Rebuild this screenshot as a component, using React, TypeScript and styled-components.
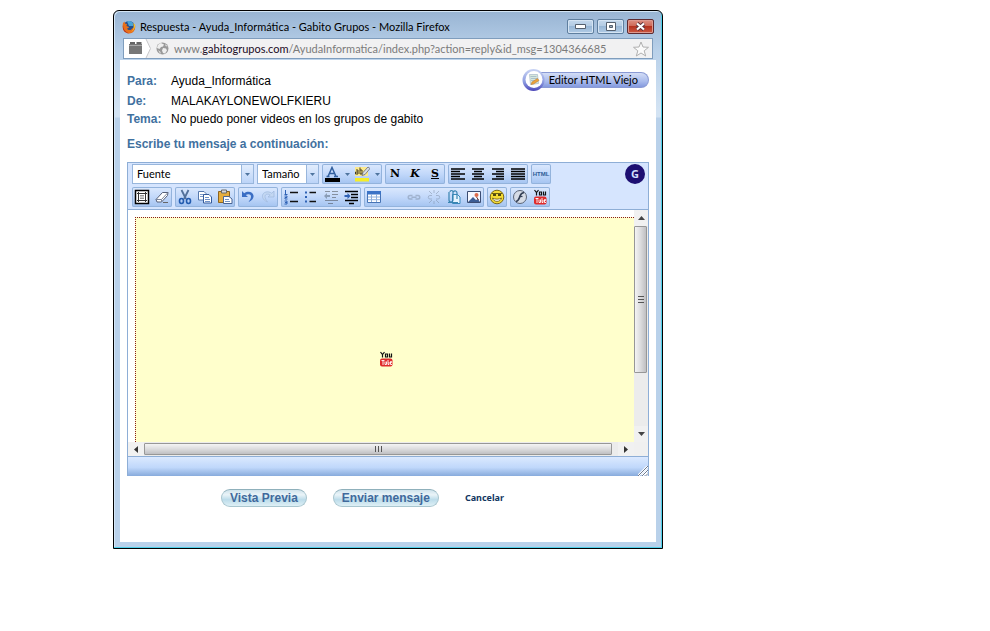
import React from "react";
import styled, { createGlobalStyle, css } from "styled-components";

const ui = `Lato, "Noto Sans", sans-serif`;
const humanist = `"Noto Sans", "Open Sans", sans-serif`;
const arial = `"Liberation Sans", Arial, sans-serif`;

const GlobalStyle = createGlobalStyle`
  * { box-sizing: border-box; }
  body { margin: 0; background: #fff; font-family: ${arial}; font-size: 12px; color: #000; }
  button, input, select { font: inherit; margin: 0; padding: 0; border: 0; background: none; color: inherit; }
`;

const Page = styled.div`
  padding: 10px 20px 40px 113px;
`;

const Frame = styled.main`
  max-width: 550px;
  border: 1px solid #000;
  border-radius: 6px 6px 0 0;
  background: #b9d1ea linear-gradient(#98b4d3, #b9d1ea 40px, #d3e3f3 100px, #d3e3f3 106px, #b9d1ea 107px);
  box-shadow: inset -1px -1px 0 #4fd0ea, inset 1px 1px 0 #d4e6f6;
  padding: 0 6px 6px;
`;

const TitleBar = styled.header`
  display: flex;
  align-items: center;
  height: 27px;
  padding: 4px 2px 0;
  gap: 4px;
  font: 11px/16px ${ui};
`;

const Title = styled.h1`
  flex: 1;
  margin: 0;
  font: inherit;
  white-space: nowrap;
  overflow: hidden;
`;

const Controls = styled.div`
  display: flex;
  gap: 3px;
`;

const ControlButton = styled.button<{ $close?: boolean }>`
  display: grid;
  place-items: center;
  width: 27px;
  height: 15px;
  border: 1px solid ${(p) => (p.$close ? "#5e2a30" : "#5f7f9f")};
  border-radius: 2px;
  box-shadow: inset 0 0 0 1px ${(p) => (p.$close ? "#dd9a90" : "#d5e4f3")};
  background: ${(p) =>
    p.$close
      ? "linear-gradient(#dc8f83, #cf6a58 45%, #b5321f 50%, #cc5a43)"
      : "linear-gradient(#c4d8ec, #b4cce4 45%, #98b7d6 50%, #b2cce6)"};
`;

const AddressBar = styled.div`
  display: flex;
  align-items: center;
  height: 21px;
  margin: 0 3px 1px;
  border: 1px solid #7f9dbd;
  background: #f1f1f2;
  color: #7b7b7b;
`;

const Address = styled.div`
  flex: 1;
  margin-left: 5px;
  overflow: hidden;
  white-space: nowrap;
  font: 11px/18px ${ui};
  b { font-weight: 400; color: #1a0a24; }
`;

const StarButton = styled.button`
  width: 18px;
  height: 18px;
  margin-right: 2px;
`;

const Content = styled.div`
  background: #fff;
  padding: 8px 7px 35px;
`;

const Heading = styled.div`
  display: flex;
  justify-content: space-between;
  align-items: flex-start;
`;

const Fields = styled.dl`
  display: grid;
  grid-template-columns: 44px 1fr;
  grid-template-rows: 20px 20px 16px;
  align-items: center;
  margin: 3px 0 0;
  dt { font-weight: 700; color: #41719f; }
  dd { margin: 0; font: 12px/16px ${arial}; white-space: nowrap; }
`;

const OldEditorButton = styled.button`
  display: flex;
  align-items: center;
  font: 11px/15px ${ui};
  svg { z-index: 1; }
  span {
    height: 16px;
    margin-left: -6px;
    padding: 0 10px 0 9px;
    border: 1px solid #8a9ad4;
    border-left: 0;
    border-radius: 0 8px 8px 0;
    background: linear-gradient(#d3ddf6, #a9bbec 60%, #8499de);
    line-height: 14px;
  }
`;

const Prompt = styled.h2`
  margin: 9px 0 10px;
  font: 700 12px/16px ${arial};
  color: #41719f;
`;

const Editor = styled.section`
  border: 1px solid #8eaed6;
  border-bottom: 0;
`;

const Toolbar = styled.div`
  display: grid;
  gap: 3px;
  padding: 1px 3px 2px 4px;
  background: #d6e5fe;
  border-bottom: 1px solid #8eaed6;
`;

const ToolRow = styled.div`
  display: flex;
  gap: 3px;
  height: 20px;
`;

const Group = styled.div`
  display: flex;
  border-radius: 2px;
  background: linear-gradient(#dce9fd, #c2d8fa 50%, #a3c3f0);
  box-shadow: inset 0 0 0 1px #93b3dc;
`;

const Tool = styled.button<{ $narrow?: boolean; $faded?: boolean }>`
  display: grid;
  place-items: center;
  width: ${(p) => (p.$narrow ? 10 : 20)}px;
  height: 20px;
  opacity: ${(p) => (p.$faded ? 0.45 : 1)};
`;

const Letter = styled.span<{ $look: "bold" | "italic" | "underline" }>`
  font: 900 11px/16px "DejaVu Serif", serif;
  ${(p) => p.$look === "italic" && css`font-style: italic;`}
  ${(p) => p.$look === "underline" && css`text-decoration: underline;`}
`;

const HtmlText = styled.span`
  font: 700 6px/8px ${arial};
  color: #2d5c96;
`;

const Picker = styled.label<{ $width: number }>`
  display: grid;
  grid-template-columns: 1fr 12px;
  width: ${(p) => p.$width}px;
  border: 1px solid #98b6dc;
  background: #fff;
  select {
    grid-area: 1 / 1 / 2 / 3;
    appearance: none;
    padding: 0 14px 0 4px;
    font: 11px/18px ${ui};
    outline: 0;
  }
`;

const PickerArrow = styled.span`
  grid-area: 1 / 2;
  display: grid;
  place-items: center;
  border-left: 1px solid #98b6dc;
  background: linear-gradient(#e2edfd, #bcd4f8);
  pointer-events: none;
`;

const Badge = styled.button`
  width: 20px;
  height: 20px;
  margin-left: auto;
  border-radius: 50%;
  background: #1d0f72;
  color: #d5e0ff;
  font: 700 11px/20px ${humanist};
  text-align: center;
`;

const Workspace = styled.div`
  display: grid;
  grid-template-columns: 1fr 14px;
  grid-template-rows: 232px 14px;
  background: #f0f0f0;
`;

const Sheet = styled.div`
  padding: 7px 0 0 7px;
  background: #fff;
  overflow: hidden;
`;

const Message = styled.div`
  height: 100%;
  padding: 133px 0 0 2px;
  border: 1px dotted #8a1c1c;
  border-width: 1px 0 0 1px;
  background: #ffffcc;
  text-align: center;
  outline: 0;
`;

const Scroll = styled.div<{ $across?: boolean }>`
  display: flex;
  flex-direction: ${(p) => (p.$across ? "row" : "column")};
  background: #ececec;
`;

const ScrollArrow = styled.button`
  display: grid;
  place-items: center;
  flex: 0 0 16px;
  background: #f1f1f1;
`;

const Thumb = styled.div<{ $across?: boolean; $grow: number }>`
  display: grid;
  place-items: center;
  flex: ${(p) => p.$grow} 1 0;
  margin: ${(p) => (p.$across ? "1px 0" : "0 1px 0 0")};
  border: 1px solid #979797;
  border-radius: 1px;
  background: linear-gradient(${(p) => (p.$across ? "180deg" : "90deg")}, #f4f4f4, #dcdcde 50%, #bfbfc2);
`;

const Track = styled.div<{ $grow: number }>`
  flex: ${(p) => p.$grow} 1 0;
`;

const StatusBar = styled.footer`
  display: flex;
  justify-content: flex-end;
  align-items: flex-end;
  height: 20px;
  border-top: 1px solid #8eaed6;
  background: linear-gradient(#dbe9ff, #c0d8fb 55%, #88abdc);
`;

const Actions = styled.div`
  display: flex;
  align-items: center;
  margin: 13px 0 0 94px;
`;

const Pill = styled.button`
  height: 18px;
  margin-right: 26px;
  padding: 0 8px;
  border: 1px solid #a9c6cf;
  border-top-color: #8fb0bb;
  border-radius: 9px;
  background: linear-gradient(#cfe3ec, #eaf4f8 30%, #bcdcea 60%, #dff0f6);
  font: 700 12px/16px ${arial};
  color: #40699c;
`;

const CancelLink = styled.a`
  font: 700 9px/16px ${humanist};
  color: #12375f;
  text-decoration: none;
`;

const Down = () => (
  <svg width="5" height="3" viewBox="0 0 5 3"><path d="M0 0h5L2.5 3z" fill="#4f759f" /></svg>
);

const Firefox = () => (
  <svg width="14" height="14" viewBox="0 0 14 14">
    <circle cx="7" cy="7" r="6" fill="#244f8f" />
    <path d="M5 1.500C9 0 12 3 11 6L7 6z" fill="#4aa3d8" />
    <path d="M1 3C0 8 1 13 7 13.400c5 0 7-5 6-9-.5 3-2 4-3 4-1 2-4 2-5 0 1 0 2-1 2-1.500L4.500 6 5 4 3 3.500 2.500 1.500z" fill="#e8701a" />
    <path d="M13 4.500c.5 4-2 7-5 7.500 3-.5 4-4 3.500-7.500L11 3z" fill="#fcc32c" />
    <path d="M1 5c0 4 2 7 6 8.400C3 13 0 10 1 5z" fill="#b3281c" />
  </svg>
);

const SiteTab = () => (
  <svg width="32" height="19" viewBox="0 0 32 19">
    <path d="M0 0h22l4.500 9.500L22 19H0z" fill="#fff" />
    <path d="M22 0l4.500 9.500L22 19" fill="none" stroke="#c6c6c8" />
    <path d="M5 5h13v10H5z" fill="#777" />
    <path d="M6 3h5v2H6zM12.500 3h5v2h-5z" fill="#666" />
    <path d="M5 6.500h13" stroke="#aaa" />
  </svg>
);

const Globe = () => (
  <svg width="13" height="13" viewBox="0 0 13 13">
    <circle cx="6.500" cy="6.500" r="6" fill="#999" />
    <path d="M5 1l3 1.500-1 2-2 .5-1.500 2-2.500-1C1.500 3 3 1.500 5 1zM7 6l3 .5 1 2-2 3-2-.5-1-2.500zM9.500 2l2 2.500-2-.5zM2 8l2.500 2v2z" fill="#eee" />
  </svg>
);

const Star = () => (
  <svg width="18" height="18" viewBox="0 0 18 18">
    <path d="M9 2l2 5 5.500.3-4.300 3.500 1.500 5.200L9 13l-4.700 3 1.500-5.200L1.500 7.300 7 7z" fill="#fafafa" stroke="#b0b0b0" />
  </svg>
);

const NoteBadge = () => (
  <svg width="24" height="24" viewBox="0 0 24 24">
    <defs>
      <linearGradient id="ring" x1="0" y1="0" x2="0" y2="1">
        <stop offset="0" stopColor="#c9d4f4" /><stop offset=".6" stopColor="#8c9be0" /><stop offset="1" stopColor="#4a45b8" />
      </linearGradient>
    </defs>
    <circle cx="11.500" cy="12" r="11" fill="url(#ring)" />
    <circle cx="12" cy="11.500" r="8.500" fill="#fff" />
    <path d="M7.500 6.500h8l1 9-8 1z" fill="#d7e8dc" stroke="#a9b9c8" strokeWidth=".7" />
    <path d="M8.500 8.500h6M9 10.500h6M9 12.500h4" stroke="#9fb6c8" strokeWidth=".8" />
    <path d="M9 16.500l1-2.500 5.500-3.500 1.500 2-5.500 3.500z" fill="#eda33c" stroke="#b87426" strokeWidth=".5" />
  </svg>
);

const YouTube = () => (
  <svg width="14" height="16" viewBox="0 0 14 16">
    <path d="M1.500 1L3.500 3.500 5.500 1M3.500 3.500V6.500M6.500 3h2v3h-2zM10.500 2.500v3.500h2V2.500" fill="none" stroke="#111" strokeWidth="1.200" />
    <rect x="1" y="7.500" width="12.500" height="8" rx="2" fill="#e02b2b" />
    <path d="M2.500 9.500h3M4 9.500v4.500M6 10.500V13.500h1.500v-3M9 9v4.500h1V11M11 11.500h1.500v-1H11.500v3h1.500" fill="none" stroke="#fff" strokeWidth=".9" />
  </svg>
);

const icons: Record<string, React.ReactNode> = {
  page: <><path d="M1.500 1.500h13v13h-13z" fill="#fff" stroke="#000" strokeWidth="1.500" /><path d="M4.500 4.500h7v7h-7zM3 4.500h10M3 11.500h10M4.500 3v10M11.500 3v10" fill="none" stroke="#333" /><path d="M6 6.500h4M6 8h4M6 9.500h4" stroke="#999" /></>,
  eraser: <><path d="M2 10.500L8.500 3.500H14L13.500 6.500 7.500 13H3z" fill="#fff" stroke="#555f78" /><path d="M2 10.500h5.500L14 3.500M7.500 10.500V13" fill="none" stroke="#7b869c" /><path d="M9 13.500h5" stroke="#666" /></>,
  cut: <><path d="M4.500 1l4.500 9M11.500 1L7 10" stroke="#52709a" strokeWidth="1.800" /><ellipse cx="4.500" cy="12" rx="2" ry="2.500" fill="none" stroke="#245db0" strokeWidth="1.600" /><ellipse cx="11.500" cy="12" rx="2" ry="2.500" fill="none" stroke="#245db0" strokeWidth="1.600" /></>,
  copy: <><path d="M1.500 2.500H7l2.500 2.500v6h-8z" fill="#fff" stroke="#5678ad" /><path d="M3 5.500h4M3 7.500h4" stroke="#7c9acb" /><path d="M6.500 5.500H12l2.500 2.500v6h-8z" fill="#fff" stroke="#355b9b" /><path d="M8 8.500h4M8 10.500h5M8 12.500h5" stroke="#6d90c9" /></>,
  paste: <><path d="M1.500 2.500h11v11h-11z" fill="#e7ae3c" stroke="#8d6420" /><path d="M4.500 1h5v3h-5z" fill="#d8d9db" stroke="#6c6b65" /><path d="M6.500 7.500H12l3 2.500v4.500H6.500z" fill="#fff" stroke="#4a6594" /><path d="M8 10.500h4M8 12.500h5" stroke="#7293c4" /></>,
  undo: <path d="M2 2v6h6L5.800 6C8 4.500 11 5 11 7.500c0 2-1 3.500-2.500 5.500C12 11.500 14 9 13.500 6.500 13 3 8 1.500 4.200 4.300z" fill="#3b6ec4" />,
  redo: <path d="M14 2v6H8l2.200-2C8 4.500 5 5 5 7.500c0 2 1 3.500 2.500 5.500C4 11.500 2 9 2.500 6.500 3 3 8 1.500 11.800 4.300z" fill="#c3d7f2" stroke="#9db8dc" strokeWidth=".7" />,
  ordered: <><path d="M2.500 1v4M1.500 5.500h3M1.500 7h2.500v1.500H2v1.500h2.500M1.500 12h2.500v3H1.500M2 13.500h2" fill="none" stroke="#2f62b5" /><path d="M7 3.500h8M7 12.500h8" stroke="#111" strokeWidth="1.300" /></>,
  bullets: <><path d="M2 2.500h2v2H2zM2 7h2v2H2zM2 11.500h2v2H2z" fill="#2f62b5" /><path d="M6.500 3.500H13M6.500 12.500H13" stroke="#111" strokeWidth="1.300" /></>,
  outdent: <><path d="M2 2.500h5M9 2.500h6M9 5.500h6M9 8.500h4M2 11.500h13M5 14.500h5" stroke="#333" /><path d="M1 7l3-3v2h3v2H4v2z" fill="#456" /></>,
  indent: <><path d="M2 2.500h13M8 5.500h7M8 8.500h7M2 11.500h13M6 14.500h5" stroke="#000" strokeWidth="1.400" /><path d="M7.500 7l-3-3v2h-3v2h3v2z" fill="#2f62b5" /></>,
  table: <><path d="M1.500 2.500h13v11h-13z" fill="#fff" stroke="#4774b5" /><path d="M1 2h14v3.500H1z" fill="#3b73c6" /><path d="M5.500 5v8M10.500 5v8M2 8h12M2 10.700h12" stroke="#8fb0dc" /></>,
  link: <path d="M6.500 6.500H4a1.700 1.700 0 000 3.500h2.500M9.500 6.500H12a1.700 1.700 0 010 3.500H9.500M5.500 8.300h5" fill="none" stroke="#77869c" strokeWidth="1.500" />,
  unlink: <path d="M6 6.500H4A1.700 1.700 0 004 10h2M10 6.500h2a1.700 1.700 0 010 3.500h-2M3 2l3 3M13 2l-3 3M8 1v3M8 12v3M3 14l3-3M13 14l-3-3" fill="none" stroke="#77869c" />,
  anchor: <><path d="M6.500 5.500h5l2.500 2.500v6.500H6.500z" fill="#e5f4ff" stroke="#3989bb" /><path d="M3 3v8a2 2 0 004 0V3a1.500 1.500 0 00-3 0M7 3c2-2 4-1 4 1v6M2 13.500h10" fill="none" stroke="#3884b1" strokeWidth="1.200" /></>,
  image: <><path d="M1.500 2.500h13v11h-13z" fill="#f6f8ff" stroke="#3c4d72" /><path d="M2 13l5-5 3 3 2-1 2 3z" fill="#3c5d94" /><circle cx="10.500" cy="6" r="2" fill="#de6b4b" /><path d="M10.500 8l2 3" stroke="#7a3b2c" /></>,
  smile: <><circle cx="8" cy="8" r="6.800" fill="#f5dc35" stroke="#7b6814" /><path d="M3 4.500h10" stroke="#6b5f14" /><path d="M4 5h3v2H4zM9 5h3v2H9z" fill="#51480f" /><path d="M3.500 9c1 4.500 8 4.500 9 0-2 1.500-7 1.500-9 0z" fill="#fff" stroke="#61520e" strokeWidth=".8" /></>,
  flash: <><circle cx="8" cy="8" r="6.500" fill="#d6dce6" stroke="#5b6577" /><path d="M12 3.500C8 4 8.500 6.500 7.500 8.500 6.800 10.500 6 12 4 12.500" fill="none" stroke="#333f55" strokeWidth="1.700" /><path d="M7.500 7.500h3" stroke="#333f55" strokeWidth="1.200" /></>,
  color: <><path d="M4 10.500L8 1.500l4 9M5.500 7.500h5M2.500 10.500h3M10 10.500h4" fill="none" stroke="#315f9e" strokeWidth="1.500" /><path d="M1 12h15v4H1z" fill="#000" /></>,
  highlight: <><path d="M1 1h13v9H1z" fill="#fbe98d" /><path d="M2 4h2v4H1.500V6H4M6 1.500V8h2V4H6" fill="none" stroke="#443c20" /><path d="M8 9.500l1-3L14 1l2 1.500-5 6z" fill="#d9dde5" stroke="#52596c" strokeWidth=".7" /><path d="M1 12h14v3.500H1z" fill="#f5ee28" /></>,
  left: <path d="M1 3h14M1 5.500h9M1 8h14M1 10.500h9M1 13h14" stroke="#000" strokeWidth="1.500" />,
  center: <path d="M2 3h12M4 5.500h8M2 8h12M4 10.500h8M2 13h12" stroke="#000" strokeWidth="1.500" />,
  right: <path d="M2 3h12M6 5.500h8M2 8h12M6 10.500h8M2 13h12" stroke="#000" strokeWidth="1.500" />,
  justify: <path d="M1 3h14M1 5.500h14M1 8h14M1 10.500h14M1 13h14" stroke="#000" strokeWidth="1.500" />,
};

const ToolIcon = ({ name, label, faded }: { name: string; label: string; faded?: boolean }) => (
  <Tool aria-label={label} title={label} $faded={faded}>
    <svg width="16" height="16" viewBox="0 0 16 16">{icons[name]}</svg>
  </Tool>
);

const groups: [string, string, boolean?][][] = [
  [["page", "Ajustar"], ["eraser", "Quitar formato"]],
  [["cut", "Cortar"], ["copy", "Copiar"], ["paste", "Pegar"]],
  [["undo", "Deshacer"], ["redo", "Rehacer"]],
  [["ordered", "Lista numerada"], ["bullets", "Viñetas"], ["outdent", "Reducir sangría", true], ["indent", "Aumentar sangría"]],
  [["table", "Tabla"], ["blank", "Regla"], ["link", "Enlace", true], ["unlink", "Quitar enlace", true], ["anchor", "Adjuntar"], ["image", "Imagen"]],
  [["smile", "Emoticonos"]],
];

export default function App() {
  return (
    <Page>
      <GlobalStyle />
      <Frame>
        <TitleBar>
          <Firefox />
          <Title>Respuesta - Ayuda_Informática - Gabito Grupos - Mozilla Firefox</Title>
          <Controls>
            <ControlButton aria-label="Minimizar">
              <svg width="11" height="5" viewBox="0 0 11 5"><path d="M.5.500h10v4H.5z" fill="#fff" stroke="#55606e" /></svg>
            </ControlButton>
            <ControlButton aria-label="Maximizar">
              <svg width="10" height="9" viewBox="0 0 10 9"><path d="M.5.500h9v8h-9z" fill="#fff" stroke="#55606e" /><path d="M3.500 3.500h3v2h-3z" fill="#9ab" stroke="#55606e" /></svg>
            </ControlButton>
            <ControlButton aria-label="Cerrar" $close>
              <svg width="11" height="9" viewBox="0 0 11 9"><path d="M2 1.500l7 6M9 1.500l-7 6" stroke="#5a3038" strokeWidth="4" /><path d="M2 1.500l7 6M9 1.500l-7 6" stroke="#fff" strokeWidth="2.200" /></svg>
            </ControlButton>
          </Controls>
        </TitleBar>
        <AddressBar>
          <SiteTab />
          <Globe />
          <Address>www.<b>gabitogrupos.com</b>/AyudaInformatica/index.php?action=reply&amp;id_msg=1304366685</Address>
          <StarButton aria-label="Marcar página"><Star /></StarButton>
        </AddressBar>
        <Content>
          <Heading>
            <Fields>
              <dt>Para:</dt><dd>Ayuda_Informática</dd>
              <dt>De:</dt><dd>MALAKAYLONEWOLFKIERU</dd>
              <dt>Tema:</dt><dd>No puedo poner videos en los grupos de gabito</dd>
            </Fields>
            <OldEditorButton><NoteBadge /><span>Editor HTML Viejo</span></OldEditorButton>
          </Heading>
          <Prompt>Escribe tu mensaje a continuación:</Prompt>
          <Editor>
            <Toolbar>
              <ToolRow>
                <Picker $width={122}>
                  <select aria-label="Fuente"><option>Fuente</option></select>
                  <PickerArrow><Down /></PickerArrow>
                </Picker>
                <Picker $width={62}>
                  <select aria-label="Tamaño"><option>Tamaño</option></select>
                  <PickerArrow><Down /></PickerArrow>
                </Picker>
                <Group>
                  <ToolIcon name="color" label="Color de texto" />
                  <Tool $narrow aria-label="Elegir color de texto"><Down /></Tool>
                  <ToolIcon name="highlight" label="Resaltado" />
                  <Tool $narrow aria-label="Elegir resaltado"><Down /></Tool>
                </Group>
                <Group>
                  <Tool><Letter $look="bold">N</Letter></Tool>
                  <Tool><Letter $look="italic">K</Letter></Tool>
                  <Tool><Letter $look="underline">S</Letter></Tool>
                </Group>
                <Group>
                  <ToolIcon name="left" label="Alinear a la izquierda" />
                  <ToolIcon name="center" label="Centrar" />
                  <ToolIcon name="right" label="Alinear a la derecha" />
                  <ToolIcon name="justify" label="Justificar" />
                </Group>
                <Group><Tool><HtmlText>HTML</HtmlText></Tool></Group>
                <Badge>G</Badge>
              </ToolRow>
              <ToolRow>
                {groups.map((group, i) => (
                  <Group key={i}>
                    {group.map(([name, label, faded]) => (
                      <ToolIcon key={name} name={name} label={label} faded={faded} />
                    ))}
                  </Group>
                ))}
                <Group>
                  <ToolIcon name="flash" label="Flash" />
                  <Tool aria-label="YouTube"><YouTube /></Tool>
                </Group>
              </ToolRow>
            </Toolbar>
            <Workspace>
              <Sheet>
                <Message contentEditable suppressContentEditableWarning role="textbox" aria-label="Mensaje"><YouTube /></Message>
              </Sheet>
              <Scroll>
                <ScrollArrow aria-label="Subir"><svg width="7" height="4" viewBox="0 0 7 4"><path d="M0 4h7L3.500 0z" fill="#444" /></svg></ScrollArrow>
                <Thumb $grow={146}><svg width="6" height="7" viewBox="0 0 6 7"><path d="M0 .5h6M0 3.500h6M0 6.500h6" stroke="#555" /></svg></Thumb>
                <Track $grow={54} />
                <ScrollArrow aria-label="Bajar"><svg width="7" height="4" viewBox="0 0 7 4"><path d="M0 0h7L3.500 4z" fill="#444" /></svg></ScrollArrow>
              </Scroll>
              <Scroll $across>
                <ScrollArrow aria-label="Izquierda"><svg width="4" height="7" viewBox="0 0 4 7"><path d="M4 0v7L0 3.500z" fill="#333" /></svg></ScrollArrow>
                <Thumb $across $grow={467}><svg width="7" height="6" viewBox="0 0 7 6"><path d="M.5 0v6M3.500 0v6M6.500 0v6" stroke="#555" /></svg></Thumb>
                <Track $grow={6} />
                <ScrollArrow aria-label="Derecha"><svg width="4" height="7" viewBox="0 0 4 7"><path d="M0 0v7L4 3.500z" fill="#333" /></svg></ScrollArrow>
              </Scroll>
            </Workspace>
            <StatusBar>
              <svg width="10" height="10" viewBox="0 0 10 10"><path d="M0 10L10 0M4 10l6-6M7.500 10L10 7.500" stroke="#fff" strokeWidth="2.500" /><path d="M0 10L10 0M4 10l6-6M7.500 10L10 7.500" stroke="#6c7a92" /></svg>
            </StatusBar>
          </Editor>
          <Actions>
            <Pill>Vista Previa</Pill>
            <Pill>Enviar mensaje</Pill>
            <CancelLink href="#">Cancelar</CancelLink>
          </Actions>
        </Content>
      </Frame>
    </Page>
  );
}
